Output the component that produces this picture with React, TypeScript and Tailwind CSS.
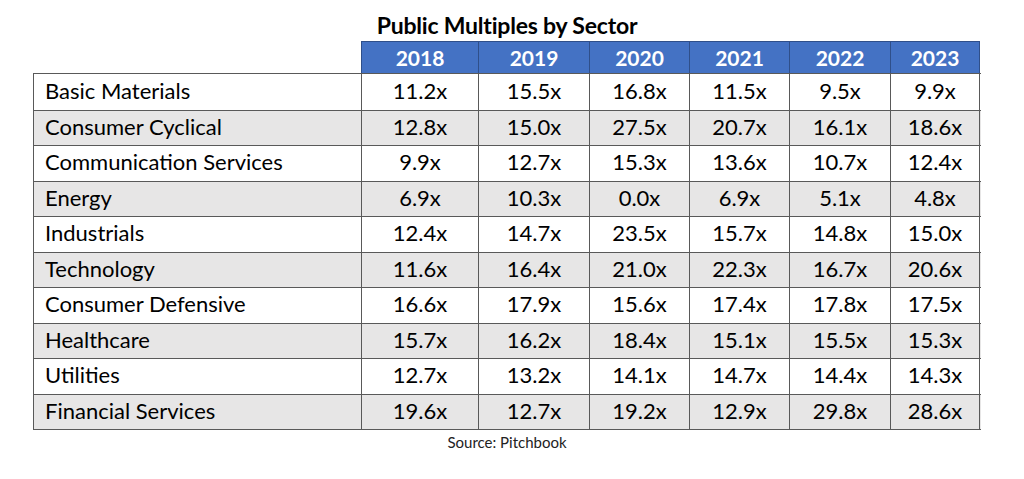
import React from "react";

const years = ["2018", "2019", "2020", "2021", "2022", "2023"];
const colW = ["w-[117px]", "w-[111px]", "w-[100px]", "w-[100px]", "w-[101px]", "w-[90px]"];

const rows: { name: string; vals: string[]; h: string }[] = [
  { name: "Basic Materials", vals: ["11.2x", "15.5x", "16.8x", "11.5x", "9.5x", "9.9x"], h: "h-[37px]" },
  { name: "Consumer Cyclical", vals: ["12.8x", "15.0x", "27.5x", "20.7x", "16.1x", "18.6x"], h: "h-[35px]" },
  { name: "Communication Services", vals: ["9.9x", "12.7x", "15.3x", "13.6x", "10.7x", "12.4x"], h: "h-[36px]" },
  { name: "Energy", vals: ["6.9x", "10.3x", "0.0x", "6.9x", "5.1x", "4.8x"], h: "h-[35px]" },
  { name: "Industrials", vals: ["12.4x", "14.7x", "23.5x", "15.7x", "14.8x", "15.0x"], h: "h-[36px]" },
  { name: "Technology", vals: ["11.6x", "16.4x", "21.0x", "22.3x", "16.7x", "20.6x"], h: "h-[35px]" },
  { name: "Consumer Defensive", vals: ["16.6x", "17.9x", "15.6x", "17.4x", "17.8x", "17.5x"], h: "h-[36px]" },
  { name: "Healthcare", vals: ["15.7x", "16.2x", "18.4x", "15.1x", "15.5x", "15.3x"], h: "h-[35px]" },
  { name: "Utilities", vals: ["12.7x", "13.2x", "14.1x", "14.7x", "14.4x", "14.3x"], h: "h-[36px]" },
  { name: "Financial Services", vals: ["19.6x", "12.7x", "19.2x", "12.9x", "29.8x", "28.6x"], h: "h-[35px]" },
];

export default function App() {
  return (
    <div
      className="w-[1024px] h-[479px] bg-white text-black overflow-hidden"
      style={{ fontFamily: "Lato, 'Open Sans', sans-serif" }}
    >
      <div className="ml-[33px] w-[948px] flex flex-col">
        <div className="h-[41px] flex items-end justify-center pb-[4px]">
          <span className="text-[23px] font-bold leading-none tracking-[-0.2px]">Public Multiples by Sector</span>
        </div>
        <div className="flex h-[32px]">
          <div className="w-[328px]" />
          {years.map((y, i) => (
            <div
              key={y}
              className={`${colW[i]} bg-[#4472c4] border-t border-l border-[#2f4f8a] flex items-center justify-center text-white font-bold text-[21px] leading-none ${
                i === 5 ? "border-r" : ""
              }`}
            >
              {y}
            </div>
          ))}
        </div>
        <div className="flex flex-col border-b border-[#595959]">
          {rows.map((r, ri) => (
            <div
              key={r.name}
              className={`flex ${r.h} border-t border-[#595959] ${ri % 2 === 1 ? "bg-[#e7e6e6]" : "bg-white"}`}
            >
              <div className="w-[328px] border-l border-[#595959] flex items-center pl-[11px] pb-[3px] text-[22px] leading-none">
                {r.name}
              </div>
              {r.vals.map((v, i) => (
                <div
                  key={i}
                  className={`${colW[i]} border-l border-[#595959] flex items-center justify-center pb-[3px] text-[22px] leading-none ${
                    i === 5 ? "border-r" : ""
                  }`}
                >
                  {v}
                </div>
              ))}
            </div>
          ))}
        </div>
        <div className="flex justify-center pt-[1px] text-[15px] text-[#222]">Source: Pitchbook</div>
      </div>
    </div>
  );
}
